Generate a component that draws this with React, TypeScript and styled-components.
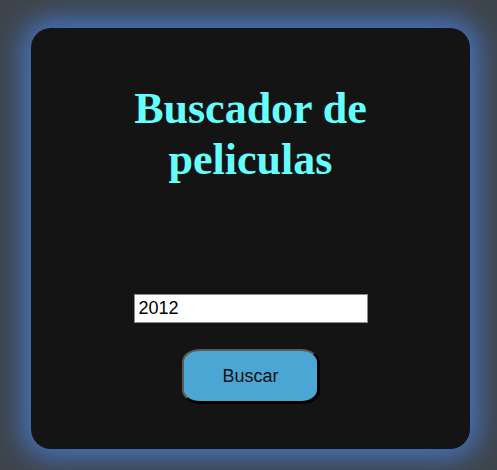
import React, { useState } from "react";
import styled, { createGlobalStyle } from "styled-components";

const GlobalStyle = createGlobalStyle`
  html, body {
    margin: 0;
    padding: 0;
    background: #3e444b;
    width: 497px;
    height: 470px;
    overflow: hidden;
  }
`;

const Page = styled.div`
  padding: 28px 0 0 31px;
  box-sizing: border-box;
  width: 497px;
  height: 470px;
`;

const Card = styled.main`
  width: 439px;
  height: 421px;
  box-sizing: border-box;
  background: #141414;
  border-radius: 20px;
  box-shadow: 0 0 28px 8px #4576c4;
  display: flex;
  flex-direction: column;
  align-items: center;
  padding-top: 56px;
`;

const Title = styled.h1`
  margin: 0;
  width: 260px;
  text-align: center;
  font-family: "Liberation Serif", "Times New Roman", serif;
  font-weight: bold;
  font-size: 44px;
  line-height: 50.5px;
  color: #66ffff;
`;

const SearchInput = styled.input`
  margin-top: 109px;
  width: 234px;
  height: 29px;
  box-sizing: border-box;
  border: 1px solid #8a8a8a;
  padding: 1px 4px;
  font-family: "Liberation Sans", Arial, sans-serif;
  font-size: 18px;
  color: #000;
  background: #fff;
  outline: none;
`;

const SearchButton = styled.button`
  margin-top: 26px;
  width: 137px;
  height: 54px;
  box-sizing: border-box;
  background: #4ba6d4;
  border: 2px solid #5a5a5a;
  border-right-color: #000;
  border-bottom-color: #000;
  border-radius: 18px / 13px;
  box-shadow: 1px 1px 0 #000;
  font-family: "Liberation Sans", Arial, sans-serif;
  font-size: 18px;
  color: #111;
  cursor: pointer;
`;

export default function App() {
  const [value, setValue] = useState("2012");
  return (
    <>
      <GlobalStyle />
      <Page>
        <Card>
          <Title>Buscador de peliculas</Title>
          <SearchInput value={value} onChange={(e) => setValue(e.target.value)} />
          <SearchButton>Buscar</SearchButton>
        </Card>
      </Page>
    </>
  );
}
